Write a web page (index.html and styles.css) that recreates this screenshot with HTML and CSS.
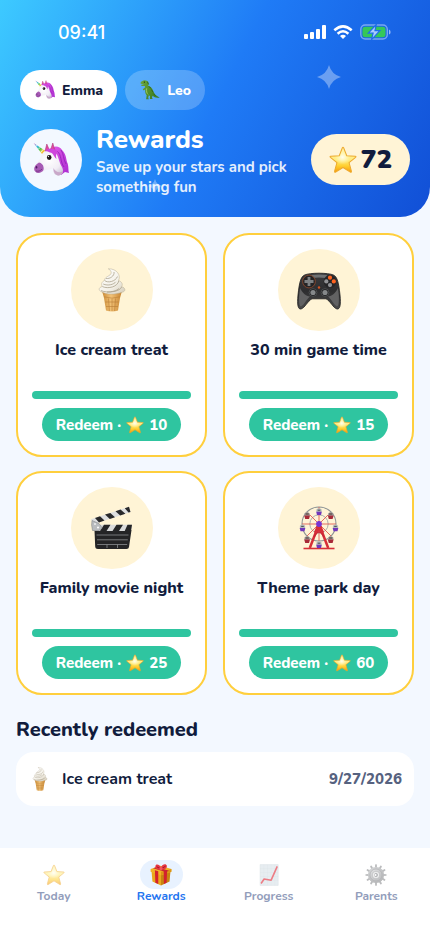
FILE: index.html
```html
<!DOCTYPE html>
<html lang="en">
<head>
    <meta charset="UTF-8">
    <meta name="viewport" content="width=device-width, initial-scale=1.0">
    <title>Rewards</title>
    <link rel="stylesheet" href="styles.css">
</head>
<body>
    <!-- Icon set -->
    <svg class="icon-defs" aria-hidden="true">
        <defs>
            <linearGradient id="starFill" x1="0" y1="0" x2="0" y2="1">
                <stop offset="0" stop-color="#fff3a8"/>
                <stop offset="0.5" stop-color="#ffec80"/>
                <stop offset="0.75" stop-color="#ffcf2e"/>
                <stop offset="1" stop-color="#f79a0c"/>
            </linearGradient>
            <radialGradient id="starShine" cx="0.48" cy="0.4" r="0.36">
                <stop offset="0" stop-color="#fffef0"/>
                <stop offset="1" stop-color="#fffbc8" stop-opacity="0"/>
            </radialGradient>
            <linearGradient id="coneFill" x1="0" y1="0" x2="1" y2="0">
                <stop offset="0" stop-color="#c98a35"/>
                <stop offset="0.45" stop-color="#f2c277"/>
                <stop offset="1" stop-color="#c78430"/>
            </linearGradient>
            <linearGradient id="creamFill" x1="0" y1="0" x2="1" y2="1">
                <stop offset="0" stop-color="#ffffff"/>
                <stop offset="0.6" stop-color="#f4f1e8"/>
                <stop offset="1" stop-color="#d3cab6"/>
            </linearGradient>
            <linearGradient id="maneFill" x1="0" y1="0" x2="1" y2="1">
                <stop offset="0" stop-color="#e35be8"/>
                <stop offset="1" stop-color="#a92bd0"/>
            </linearGradient>
            <radialGradient id="headFill" cx="0.5" cy="0.4" r="0.7">
                <stop offset="0" stop-color="#ffffff"/>
                <stop offset="0.6" stop-color="#f1edf5"/>
                <stop offset="1" stop-color="#c8bfd3"/>
            </radialGradient>
            <linearGradient id="hornFill" x1="0" y1="0" x2="1" y2="1">
                <stop offset="0" stop-color="#e05bb5"/>
                <stop offset="0.3" stop-color="#33b9e8"/>
                <stop offset="0.55" stop-color="#4bc552"/>
                <stop offset="0.75" stop-color="#f7cf3b"/>
                <stop offset="1" stop-color="#ee7330"/>
            </linearGradient>
            <linearGradient id="padFill" x1="0" y1="0" x2="0" y2="1">
                <stop offset="0" stop-color="#3b3b3d"/>
                <stop offset="0.5" stop-color="#2d2d2f"/>
                <stop offset="1" stop-color="#4b4b4b"/>
            </linearGradient>
            <linearGradient id="dinoFill" x1="0" y1="0" x2="1" y2="1">
                <stop offset="0" stop-color="#6da63a"/>
                <stop offset="1" stop-color="#34781f"/>
            </linearGradient>
            <radialGradient id="gearFill" cx="0.4" cy="0.35" r="0.7">
                <stop offset="0" stop-color="#cfd1d3"/>
                <stop offset="1" stop-color="#77797c"/>
            </radialGradient>
        </defs>

        <symbol id="star" viewBox="0 0 36 36">
            <path d="M17.2 2.2Q18 .8 18.8 2.2L22.8 12.4L33.8 13.1Q35.4 13.3 34.2 14.5L25.8 21.4L28.8 32.4Q29 34.4 27.4 33.5L18 27.6L8.6 33.5Q7 34.4 7.2 32.4L10.2 21.4L1.8 14.5Q.6 13.3 2.2 13.1L13.2 12.4Z" fill="url(#starFill)" stroke="#eda92c" stroke-width="1.3" stroke-linejoin="round"/>
            <path d="M18 4L22 13.4L32 14.3L24.6 20.8L26.6 30L18 25.5L9.4 30L11.4 20.8L4 14.3L14 13.4Z" fill="url(#starShine)"/>
        </symbol>

        <symbol id="unicorn" viewBox="0 0 36 36">
            <path d="M17 7C21 3 27 4 29 8C33 12 33 16 34 20C36 24 35 28 36 31L32 30L28 33L20 22Z" fill="url(#maneFill)"/>
            <path d="M24 9C29 13 27 20 31 25M21 11C26 16 23 21 28 27M28 8C31 12 30 17 33 22" fill="none" stroke="#8e20b4" stroke-width=".8"/>
            <path d="M.6 1L12.2 8.8L9.2 12.2Z" fill="url(#hornFill)"/>
            <path d="M3 4.2L4.3 3M5.5 7L7.3 5.2M8 10L10.3 7.2" stroke="#fff" stroke-width=".7"/>
            <path d="M9 12C12 7.5 18 6.5 22 10C26 14 26 21 29 25C31 29 30 32 26 33.5C22 33.5 19.5 31 20.5 26C16 28.5 12 27 9 30C5 32.5 1 30.5 1.3 26.5C1.8 22.5 7 19 9 12Z" fill="url(#headFill)"/>
            <path d="M6 20.5C3 22.5 1.2 24.5 1.2 27C1.5 30.5 5 32 8.3 30C10.3 29 11 27.5 10.6 25.5C10.3 22.7 8.5 21 6 20.5Z" fill="#a65ab4"/>
            <ellipse cx="3.5" cy="25.3" rx=".8" ry="1.2" fill="#4f1763"/>
            <path d="M3 29C5 29.6 7.5 29 9 27" fill="none" stroke="#6d2b80" stroke-width=".8"/>
            <path d="M20.5 26C20 30 22 33 26 33.5C28.5 33 30 31 29.8 29C27 31.5 22 30 20.5 26Z" fill="#c9a8c9"/>
            <path d="M12 9L13.8 2L16.4 8ZM17.5 8L19.8 1L22 8.8Z" fill="#e0499f" stroke="#a52c70" stroke-width=".5"/>
            <path d="M12 9C16 5 22 6 25 10C23 11 22.5 14 23.5 17C20 14 20.5 11 17 10.5C14.5 9 13 9 12 9Z" fill="#cf45dc"/>
            <ellipse cx="16.2" cy="15.5" rx="2.3" ry="2.4" fill="#1d1517"/>
            <circle cx="15.5" cy="14.6" r=".6" fill="#fff"/>
        </symbol>

        <symbol id="dino" viewBox="0 0 36 36">
            <path d="M2 3L6 1Q9-.4 12 1.2C16 2.5 16 7 14.5 10.5C18 11.5 22 14 23.5 19C25.5 24 28 28.5 35.5 31.5C30 33 26 31.5 22.5 28.5L21.5 32.2L23.2 34H17.8L18 29L15.8 27.6L14.8 32.3L16.2 34.5H11L12 27.5C9.5 24.8 8.8 20.2 9.5 16.5L6.8 18.8L5 16.8L9.3 13L8.6 10.6L3.8 10.8Q1 10 2.6 8.4L7.7 7.5L1.5 6.6Q.4 5 2 3Z" fill="url(#dinoFill)"/>
            <path d="M13.2 3L15.5 8M15.5 11.5L20 15M20.5 17L23.4 22M24 24.5L28 28.5" stroke="#285d19" stroke-width="1.4" fill="none"/>
            <path d="M12 15C11.3 20 12 24 14.6 26" stroke="#9fca62" stroke-width="1.7" fill="none"/>
            <circle cx="7.8" cy="3.8" r="1.1" fill="#171f0e"/>
        </symbol>

        <symbol id="icecream" viewBox="0 0 44 44">
            <path d="M12 23H32L30 30L28 42.4Q22 44.5 16 42.4L14 30Z" fill="url(#coneFill)"/>
            <path d="M14 28.8Q22 31.5 30 28.8M15.2 34H28.8M16 38.5H28M18.5 30.5L19.4 43M22 30.8V43M25.5 30.5L24.6 43" fill="none" stroke="#b87d35" stroke-width=".6"/>
            <path d="M18.3 .8C27 .5 31.2 7.5 28.5 12.5C32.5 14 33 17 31.5 18.6C36 20 35.8 23.6 32 24.3C25 27 16 26.4 12 24C7.8 22.4 8.6 19.4 12.2 18.5C10.8 15.7 12.2 13.4 14.6 12.4C14.3 8.4 21 8.2 21.2 4.8C21.2 2.8 19.6 1.5 18.3 .8Z" fill="url(#creamFill)" stroke="#b5aa93" stroke-width=".5"/>
            <path d="M14.8 12.6C17.5 15.2 25.5 13.7 27.5 8.5M12.4 18.6C18.2 21.2 27.8 18.8 28.8 12.8M11 22.6C18 25.6 30 23.6 31.7 18.9M16 10.4C19.7 11.2 24.7 8 24 4M13.2 16C18 18.2 24 16.4 25.8 13.8M17 24C22 24 27 22.8 29 20.4" fill="none" stroke="#a79d87" stroke-width=".75"/>
        </symbol>

        <symbol id="gamepad" viewBox="0 0 44 44">
            <path d="M7.5 7C13 4.6 31 4.6 36.5 7C40.5 9 41.7 15 43 27C44 37 43 41.5 40 41C36 40 33.5 33 29 30.8H15C10.5 33 8 40 4 41C1 41.5 0 37 1 27C2.3 15 3.5 9 7.5 7Z" fill="url(#padFill)" stroke="#1d1d1e" stroke-width=".8"/>
            <path d="M3 20C1.5 29 1.8 38.5 4 38.5C7.5 36.5 10 30.5 13 28.5C9 28 5.2 25 3 20ZM41 20C42.5 29 42.2 38.5 40 38.5C36.5 36.5 34 30.5 31 28.5C35 28 38.8 25 41 20Z" fill="#626263"/>
            <path d="M14 7Q22 5.8 30 7L29 10Q22 9 15 10Z" fill="#6e7173"/>
            <circle cx="12" cy="13.5" r="6.4" fill="#242426" stroke="#924b2d" stroke-width=".8"/>
            <path d="M10.6 9H13.4V12.1H16.5V14.9H13.4V18H10.6V14.9H7.5V12.1H10.6Z" fill="#7e8284"/>
            <circle cx="33" cy="13.5" r="6.4" fill="#252527"/>
            <circle cx="33" cy="9.7" r="2.1" fill="#ff6420"/>
            <circle cx="36.8" cy="13.4" r="2.1" fill="#ff6420"/>
            <circle cx="29.3" cy="13.4" r="2.1" fill="#919295"/>
            <circle cx="33" cy="17.1" r="2.1" fill="#919295"/>
            <circle cx="16" cy="24.5" r="3.9" fill="#202022" stroke="#626466" stroke-width=".6"/>
            <circle cx="16" cy="24.5" r="2.6" fill="#85888a"/>
            <circle cx="28" cy="24.5" r="3.9" fill="#202022" stroke="#626466" stroke-width=".6"/>
            <circle cx="28" cy="24.5" r="2.6" fill="#85888a"/>
            <circle cx="22" cy="19.5" r="1.2" fill="#d35422"/>
        </symbol>

        <symbol id="clapper" viewBox="0 0 44 44">
            <path d="M1 13.2L39 .8L40.5 6L3 18.5Z" fill="#dedfe0"/>
            <path d="M5 11.9L10 10.3L14.5 14.6L9 16.5ZM15 8.6L20.3 6.9L25 11.2L19.8 12.9ZM25.5 5.2L30.5 3.5L35.4 7.8L30.2 9.5ZM34.8 2.2L39 .8L40.5 6L38.5 6.6Z" fill="#29292b"/>
            <path d="M4.5 24H41.5L39 41Q38.8 43 36.5 43H8Q5.3 43 5.2 40.5Z" fill="#242426"/>
            <path d="M4 18.8H42L41 25H3.6Z" fill="#d9dadb"/>
            <path d="M14 18.8H20.5L16.5 25H10ZM26.5 18.8H33L29 25H22.5ZM37.5 18.8H42L41 25H34.7Z" fill="#252527"/>
            <path d="M2 14.5L9 17.5L12.3 22L9 24.5H2.5L1.6 19Z" fill="#b9bcbf" stroke="#777a7d" stroke-width=".5"/>
            <circle cx="5" cy="18" r="1" fill="#eee"/><circle cx="8" cy="21.5" r="1" fill="#fff"/>
            <path d="M6.5 29H38.5M7 33.8H37.8M7.2 38.5H37.2M17 38.5V42M27.5 38.5V42" stroke="#8a8d90" stroke-width=".8"/>
        </symbol>

        <symbol id="ferris" viewBox="0 0 44 44">
            <g fill="none">
                <circle cx="22" cy="18" r="17" stroke="#8b9294" stroke-width="1.1"/>
                <circle cx="22" cy="18" r="9.2" stroke="#a0a6a7" stroke-width=".9"/>
                <path d="M22 1V35M5 18H39M10 6L34 30M34 6L10 30" stroke="#dd4b43" stroke-width=".8"/>
            </g>
            <path d="M22 18L12.8 42M22 18L31.2 42" stroke="#d62f38" stroke-width="2.5"/>
            <path d="M17 31Q22 21 27 31" fill="none" stroke="#c92632" stroke-width="1.5"/>
            <path d="M22 15L27 26L24.8 28Q22 23 19.2 28L17 26Z" fill="#d62f38"/>
            <path d="M6.5 42.5H37.5" stroke="#d62f38" stroke-width="1.6"/>
            <circle cx="22" cy="18" r="2.9" fill="#7734d2"/>
            <g id="cabin">
                <path d="M19.4 3.5Q22 1 24.6 3.5V6H19.4Z" fill="#b4b9bb"/>
                <path d="M19.2 5.8H24.8L24 9H20Z" fill="#7138bb"/>
                <path d="M20.7 4.2H23.3" stroke="#484b52" stroke-width="1"/>
            </g>
            <use href="#cabin" x="-16.5" y="16.2"/>
            <use href="#cabin" x="16.5" y="16.2"/>
            <use href="#cabin" y="33"/>
            <g id="redCabin">
                <path d="M7.4 7.5Q10 4.5 12.8 7.5V10H7.4Z" fill="#a5a4a4"/>
                <path d="M7.2 9.5H13L12 13H8.2Z" fill="#a82937"/>
                <path d="M8.5 8H11.8" stroke="#50352f" stroke-width="1.1"/>
            </g>
            <use href="#redCabin" x="23.6"/>
            <use href="#redCabin" y="24"/>
            <use href="#redCabin" x="23.6" y="24"/>
        </symbol>

        <symbol id="gift" viewBox="0 0 36 36">
            <path d="M2.5 11.5L18 16V35L4 28.5Z" fill="#e9a81c"/>
            <path d="M33.5 11.5L18 16V35L32 28.5Z" fill="#c88410"/>
            <path d="M1 8L17 3L35 8V12.8L18 18.5L1 12.8Z" fill="#f0b328"/>
            <path d="M18 12.5L35 8V12.8L18 18.5Z" fill="#dc9514"/>
            <path d="M8 10.2L13.5 11.7V32.8L8.8 30.7ZM22.5 11.5L28 10L27.2 30.7L22.7 32.9Z" fill="#d3212e"/>
            <path d="M5 7L26 13L31 11L11 5Z" fill="#cb2431"/>
            <path d="M17.5 9C11 10 8 6.8 9 3C10-1 16 1 18 5.5C20-.2 26-.9 27.3 2.2C28.8 6.8 25 9.5 17.5 9Z" fill="#e83743"/>
            <path d="M11 4.5L17 7.5M25.5 3.5L19 7.5" stroke="#941522" stroke-width="1.4"/>
            <circle cx="18" cy="7.5" r="2.7" fill="#f25a61"/>
        </symbol>

        <symbol id="chart" viewBox="0 0 36 36">
            <path d="M3.5 1H33V35H3.5Z" fill="#d5e0e6" stroke="#b8c6cd" stroke-width=".8"/>
            <path d="M9.5 1V35M15.5 1V35M21.5 1V35M27.5 1V35M3.5 7.5H33M3.5 14H33M3.5 20.5H33M3.5 27H33" stroke="#c3d1d8" stroke-width=".6"/>
            <path d="M5 32L10 24.5L21.5 26.5L31.5 4" fill="none" stroke="#df1323" stroke-width="2.6" stroke-linejoin="round"/>
        </symbol>

        <symbol id="gear" viewBox="0 0 36 36">
            <g id="teeth" fill="#85878a">
                <path id="tooth" d="M16.4 6L16.6 1Q18 .2 19.4 1L19.6 6V30L19.4 35Q18 35.8 16.6 35L16.4 30Z"/>
                <use href="#tooth" transform="rotate(30 18 18)"/>
                <use href="#tooth" transform="rotate(60 18 18)"/>
                <use href="#tooth" transform="rotate(90 18 18)"/>
                <use href="#tooth" transform="rotate(120 18 18)"/>
                <use href="#tooth" transform="rotate(150 18 18)"/>
            </g>
            <circle cx="18" cy="18" r="13.2" fill="url(#gearFill)"/>
            <circle cx="18" cy="18" r="10" fill="none" stroke="#737578" stroke-width="1.2"/>
            <circle cx="18" cy="18" r="6.2" fill="#e1e2e3" stroke="#717376"/>
            <path d="M18 14.5L21 16.3V19.8L18 21.5L15 19.8V16.3Z" fill="#74777b"/>
            <circle cx="17.2" cy="18" r="1.7" fill="#fff"/>
        </symbol>

        <symbol id="sparkle" viewBox="0 0 24 24">
            <path d="M12 0Q14.5 9.5 24 12Q14.5 14.5 12 24Q9.5 14.5 0 12Q9.5 9.5 12 0Z" fill="#fff"/>
        </symbol>
    </svg>

    <header class="header">
        <svg class="sparkle sparkle-large" aria-hidden="true"><use href="#sparkle"/></svg>
        <svg class="sparkle sparkle-small" aria-hidden="true"><use href="#sparkle"/></svg>

        <div class="status-bar">
            <span class="time">09:41</span>
            <div class="status-icons">
                <svg width="22" height="14" viewBox="0 0 22 14" fill="#fff" aria-label="Signal">
                    <rect y="9" width="4" height="5" rx="1"/>
                    <rect x="6" y="7" width="4" height="7" rx="1"/>
                    <rect x="12" y="4" width="4" height="10" rx="1"/>
                    <rect x="18" y="0" width="4" height="14" rx="1"/>
                </svg>
                <svg width="20" height="14" viewBox="0 0 20 14" fill="none" stroke="#fff" stroke-width="2.5" aria-label="Wi-Fi">
                    <path d="M1.3 5.3Q10-2.5 18.7 5.3M4.6 8.7Q10 3.8 15.4 8.7"/>
                    <path d="M7 11Q10 8.6 13 11L10 14Z" fill="#fff" stroke="none"/>
                </svg>
                <svg width="31" height="16" viewBox="0 0 31 16" aria-label="Battery charging">
                    <rect x=".8" y="1" width="26.5" height="14" rx="4.4" fill="none" stroke="#fff" stroke-opacity=".42" stroke-width="1.4"/>
                    <path d="M29 5.5Q30.6 6 30.6 8T29 10.5Z" fill="#fff" fill-opacity=".55"/>
                    <rect x="2.5" y="2.8" width="23" height="10.4" rx="2.7" fill="#35c759"/>
                    <path d="M16.3.5L8.3 9.2H13.1L11.4 15.8L19.8 6.7H15Z" fill="#a9ccff" stroke="#1c6eea" stroke-width="1.2"/>
                </svg>
            </div>
        </div>

        <div class="profiles">
            <button class="profile active" type="button"><svg class="profile-icon"><use href="#unicorn"/></svg>Emma</button>
            <button class="profile" type="button"><svg class="profile-icon"><use href="#dino"/></svg>Leo</button>
        </div>

        <div class="hero">
            <div class="avatar"><svg class="avatar-icon"><use href="#unicorn"/></svg></div>
            <div class="hero-text">
                <h1>Rewards</h1>
                <p>Save up your stars and pick something fun</p>
            </div>
            <div class="balance"><svg class="balance-icon"><use href="#star"/></svg>72</div>
        </div>
    </header>

    <main class="content">
        <section class="reward-grid">
            <article class="reward">
                <div class="reward-picture"><svg class="reward-icon"><use href="#icecream"/></svg></div>
                <h2>Ice cream treat</h2>
                <progress value="10" max="10" aria-label="Ice cream treat progress"></progress>
                <button class="redeem" type="button">Redeem · <svg class="redeem-icon"><use href="#star"/></svg> 10</button>
            </article>
            <article class="reward">
                <div class="reward-picture"><svg class="reward-icon"><use href="#gamepad"/></svg></div>
                <h2>30 min game time</h2>
                <progress value="15" max="15" aria-label="30 min game time progress"></progress>
                <button class="redeem" type="button">Redeem · <svg class="redeem-icon"><use href="#star"/></svg> 15</button>
            </article>
            <article class="reward">
                <div class="reward-picture"><svg class="reward-icon"><use href="#clapper"/></svg></div>
                <h2>Family movie night</h2>
                <progress value="25" max="25" aria-label="Family movie night progress"></progress>
                <button class="redeem" type="button">Redeem · <svg class="redeem-icon"><use href="#star"/></svg> 25</button>
            </article>
            <article class="reward">
                <div class="reward-picture"><svg class="reward-icon"><use href="#ferris"/></svg></div>
                <h2>Theme park day</h2>
                <progress value="60" max="60" aria-label="Theme park day progress"></progress>
                <button class="redeem" type="button">Redeem · <svg class="redeem-icon"><use href="#star"/></svg> 60</button>
            </article>
        </section>

        <section class="recent">
            <h2>Recently redeemed</h2>
            <div class="recent-row">
                <svg class="recent-icon"><use href="#icecream"/></svg>
                <span class="recent-name">Ice cream treat</span>
                <time datetime="2026-09-27">9/27/2026</time>
            </div>
        </section>
    </main>

    <nav class="tab-bar">
        <a class="tab" href="#today"><span class="tab-pill"><svg class="tab-icon"><use href="#star"/></svg></span>Today</a>
        <a class="tab active" href="#rewards"><span class="tab-pill"><svg class="tab-icon"><use href="#gift"/></svg></span>Rewards</a>
        <a class="tab" href="#progress"><span class="tab-pill"><svg class="tab-icon"><use href="#chart"/></svg></span>Progress</a>
        <a class="tab" href="#parents"><span class="tab-pill"><svg class="tab-icon"><use href="#gear"/></svg></span>Parents</a>
    </nav>
</body>
</html>
```
FILE: styles.css
```css
* {
    box-sizing: border-box;
}

body {
    font-family: Nunito, "Open Sans", sans-serif;
    background-color: #f3f8ff;
    color: #111c3d;
    margin: 0;
    min-height: 100vh;
    display: flex;
    flex-direction: column;
}

h1, h2, p {
    margin: 0;
}

button {
    font-family: inherit;
    border: none;
    cursor: pointer;
}

.icon-defs {
    position: absolute;
    width: 0;
    height: 0;
}

/* Header */
.header {
    position: relative;
    padding: 20px;
    border-radius: 0 0 30px 30px;
    background: linear-gradient(117deg, #3dcaff 0%, #1f7bf6 50%, #114fd6 100%);
    color: white;
}

.sparkle {
    position: absolute;
    opacity: 0.35;
}

.sparkle-large {
    top: 65px;
    right: 89px;
    width: 24px;
    height: 24px;
}

.sparkle-small {
    top: 179px;
    left: 148px;
    width: 14px;
    height: 14px;
}

.status-bar {
    display: flex;
    justify-content: space-between;
    align-items: center;
    height: 24px;
    padding: 0 19px 0 38px;
}

.time {
    font-family: Inter, sans-serif;
    font-size: 18px;
    font-weight: 500;
}

.status-icons {
    display: flex;
    align-items: center;
    gap: 7px;
}

.profiles {
    display: flex;
    gap: 8px;
    margin-top: 26px;
}

.profile {
    display: flex;
    align-items: center;
    gap: 7px;
    height: 40px;
    padding: 0 14px 0 15px;
    border-radius: 20px;
    background-color: rgba(255, 255, 255, 0.22);
    color: white;
    font-size: 14px;
    font-weight: 800;
}

.profile.active {
    background-color: white;
    color: #111c3d;
}

.profile-icon {
    width: 20px;
    height: 20px;
}

.hero {
    position: relative;
    display: flex;
    align-items: center;
    gap: 14px;
    margin-top: 12px;
}

.avatar {
    flex: none;
    display: flex;
    align-items: center;
    justify-content: center;
    width: 62px;
    height: 62px;
    border-radius: 50%;
    background-color: #f3f8ff;
}

.avatar-icon {
    width: 36px;
    height: 36px;
}

.hero-text {
    flex: 1;
}

.hero-text h1 {
    font-size: 26px;
    font-weight: 800;
    line-height: 35px;
}

.hero-text p {
    font-size: 15px;
    font-weight: 700;
    line-height: 20px;
    opacity: 0.88;
}

.balance {
    flex: none;
    display: flex;
    align-items: center;
    gap: 4px;
    height: 51px;
    padding: 0 18px;
    border-radius: 26px;
    background-color: #fff4d6;
    color: #111c3d;
    font-size: 26px;
    font-weight: 900;
}

.balance-icon {
    width: 28px;
    height: 28px;
}

/* Rewards */
.content {
    flex: 1;
    padding: 16px;
}

.reward-grid {
    display: grid;
    grid-template-columns: 1fr 1fr;
    gap: 14px 16px;
}

.reward {
    display: flex;
    flex-direction: column;
    align-items: center;
    gap: 9px;
    padding: 14px;
    border: 2px solid #ffcf3d;
    border-radius: 26px;
    background-color: white;
}

.reward-picture {
    display: flex;
    align-items: center;
    justify-content: center;
    width: 82px;
    height: 82px;
    border-radius: 50%;
    background-color: #fff4d6;
}

.reward-icon {
    width: 44px;
    height: 44px;
}

.reward h2 {
    min-height: 42px;
    font-size: 16px;
    font-weight: 800;
    line-height: 21px;
    text-align: center;
}

.reward progress {
    appearance: none;
    display: block;
    width: 100%;
    height: 8px;
    border: none;
    border-radius: 4px;
    overflow: hidden;
}

.reward progress::-webkit-progress-bar {
    background-color: #e7eef8;
}

.reward progress::-webkit-progress-value {
    background-color: #2fc5a0;
}

.redeem {
    display: flex;
    align-items: center;
    gap: 5px;
    height: 33px;
    padding: 0 14px;
    border-radius: 17px;
    background-color: #2fc5a0;
    color: white;
    font-size: 15px;
    font-weight: 800;
}

.redeem-icon {
    width: 18px;
    height: 18px;
}

/* Recently redeemed */
.recent {
    margin-top: 21px;
}

.recent h2 {
    font-size: 20px;
    font-weight: 800;
    line-height: 27px;
}

.recent-row {
    display: flex;
    align-items: center;
    gap: 10px;
    height: 54px;
    margin-top: 9px;
    padding: 0 12px;
    border-radius: 18px;
    background-color: white;
    font-size: 16px;
    font-weight: 700;
}

.recent-icon {
    width: 24px;
    height: 24px;
}

.recent-name {
    flex: 1;
}

.recent-row time {
    color: #56627f;
    font-size: 15px;
    font-weight: 800;
}

/* Bottom navigation */
.tab-bar {
    display: grid;
    grid-template-columns: repeat(4, 1fr);
    height: 86px;
    padding-top: 12px;
    background-color: white;
}

.tab {
    display: flex;
    flex-direction: column;
    align-items: center;
    color: #929dbb;
    font-size: 12px;
    font-weight: 700;
    line-height: 15px;
    text-decoration: none;
}

.tab-pill {
    display: flex;
    align-items: center;
    justify-content: center;
    width: 43px;
    height: 29px;
    border-radius: 15px;
}

.tab-icon {
    width: 22px;
    height: 22px;
    opacity: 0.55;
}

.tab.active {
    color: #1f75f0;
}

.tab.active .tab-pill {
    background-color: #e8f2ff;
}

.tab.active .tab-icon {
    opacity: 1;
}
```
